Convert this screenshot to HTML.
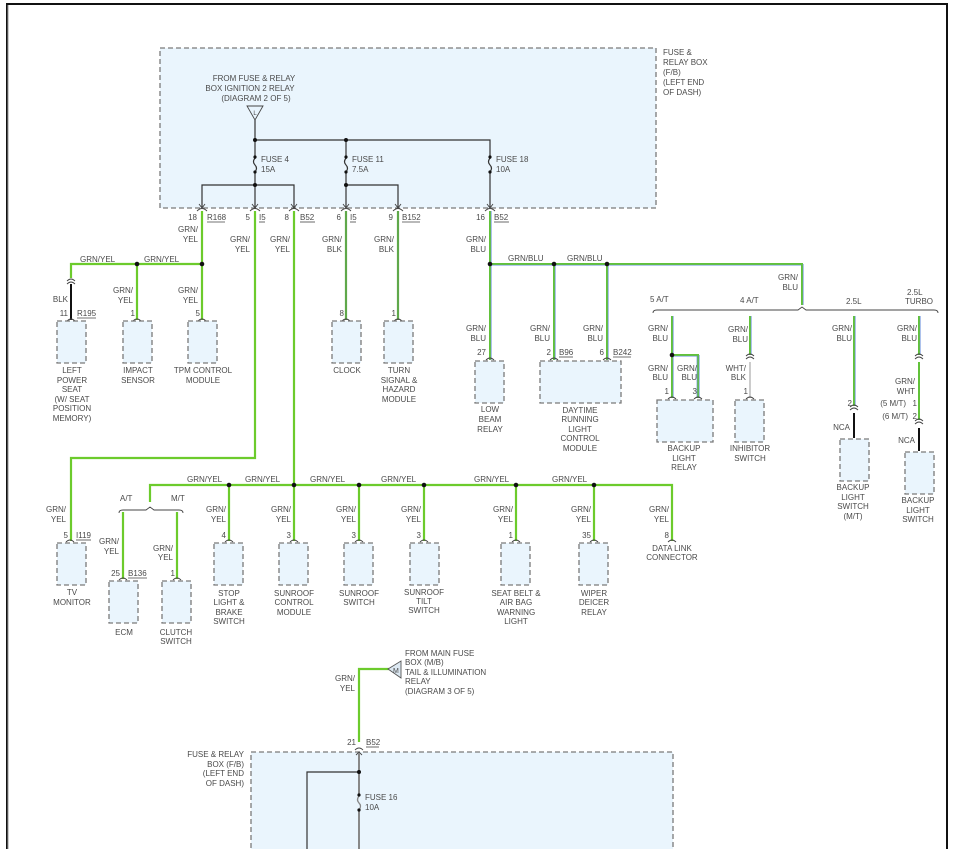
<!DOCTYPE html>
<html><head><meta charset="utf-8"><style>
html,body{margin:0;padding:0;background:#fff;width:956px;height:849px;overflow:hidden}
svg{display:block}
text{font-family:"Liberation Sans",sans-serif;font-size:8px;fill:#4a4a4a}
.m{text-anchor:middle}.r{text-anchor:end}
.box{fill:#eaf5fd;stroke:#7a7a7a;stroke-width:1.3;stroke-dasharray:5,3}
.gy{stroke:#6ccb2c;stroke-width:2.2;fill:none}
.gb{stroke:#62c23a;stroke-width:2;fill:none}
.bl{stroke:#6a90dc;stroke-width:0.7;fill:none}
.gk{stroke:#5fa84a;stroke-width:2.2;fill:none}
.k{stroke:#333;stroke-width:1.2;fill:none}
.kb{stroke:#111;stroke-width:2;fill:none}
.c{stroke:#444;stroke-width:0.9;fill:none}
.u{stroke:#444;stroke-width:0.8}
</style></head><body>
<svg width="956" height="849" viewBox="0 0 956 849">
<path d="M7 849V4H947V849" stroke="#111" stroke-width="2" fill="none"/>
<path d="M8 849V5" stroke="#999" stroke-width="1"/>

<rect class="box" x="160" y="48" width="496" height="160"/>
<text x="663" y="55">FUSE &amp;</text><text x="663" y="65">RELAY BOX</text><text x="663" y="75">(F/B)</text><text x="663" y="85">(LEFT END</text><text x="663" y="95">OF DASH)</text>
<text class="m" x="254" y="81">FROM FUSE &amp; RELAY</text>
<text class="m" x="250" y="91">BOX IGNITION 2 RELAY</text>
<text class="m" x="256" y="101">(DIAGRAM 2 OF 5)</text>
<path d="M247 106H263L255 120Z" fill="#e8f4fd" stroke="#444" stroke-width="0.9"/>
<text class="m" x="255" y="115" style="font-size:6px">L</text>
<path class="k" d="M255 120V208M255 140H490V208M346 140V208M202 208V185H294V208M346 185H398V208"/>
<g fill="#eaf5fd"><rect x="250" y="159" width="10" height="12"/><rect x="341" y="159" width="10" height="12"/><rect x="485" y="159" width="10" height="12"/></g>
<path class="k" d="M255 158q-3 4 0 7q3 3 0 7M346 158q-3 4 0 7q3 3 0 7M490 158q-3 4 0 7q3 3 0 7"/>
<g fill="#111"><circle cx="255" cy="140" r="2"/><circle cx="346" cy="140" r="2"/><circle cx="255" cy="185" r="2"/><circle cx="346" cy="185" r="2"/>
<circle cx="255" cy="157" r="1.6"/><circle cx="255" cy="172" r="1.6"/><circle cx="346" cy="157" r="1.6"/><circle cx="346" cy="172" r="1.6"/><circle cx="490" cy="157" r="1.6"/><circle cx="490" cy="172" r="1.6"/></g>
<text x="261" y="162">FUSE 4</text><text x="261" y="172">15A</text>
<text x="352" y="162">FUSE 11</text><text x="352" y="172">7.5A</text>
<text x="496" y="162">FUSE 18</text><text x="496" y="172">10A</text>
<g class="c">
<path d="M199 204l3 4 3-4M197 211q5-5 10 0M252 204l3 4 3-4M250 211q5-5 10 0M291 204l3 4 3-4M289 211q5-5 10 0M343 204l3 4 3-4M341 211q5-5 10 0M395 204l3 4 3-4M393 211q5-5 10 0M487 204l3 4 3-4M485 211q5-5 10 0"/>
</g>
<text class="r" x="197" y="220">18</text><text x="207" y="220">R168</text><line class="u" x1="207" y1="222" x2="225" y2="222"/>
<text class="r" x="250" y="220">5</text><text x="259" y="220">I5</text><line class="u" x1="259" y1="222" x2="265" y2="222"/>
<text class="r" x="289" y="220">8</text><text x="300" y="220">B52</text><line class="u" x1="300" y1="222" x2="315" y2="222"/>
<text class="r" x="341" y="220">6</text><text x="350" y="220">I5</text><line class="u" x1="350" y1="222" x2="356" y2="222"/>
<text class="r" x="393" y="220">9</text><text x="402" y="220">B152</text><line class="u" x1="402" y1="222" x2="420" y2="222"/>
<text class="r" x="485" y="220">16</text><text x="494" y="220">B52</text><line class="u" x1="494" y1="222" x2="509" y2="222"/>

<path class="gy" d="M202 211V320M202 264H71V278M137 264V320M255 211V458H71V541M294 211V541"/>
<path class="gk" d="M346 211V320M398 211V320"/>
<path class="c" d="M67 281q4-4 8 0M67 284q4-4 8 0"/>
<path class="kb" d="M71 284V320"/>
<g fill="#111"><circle cx="137" cy="264" r="2.3"/><circle cx="202" cy="264" r="2.3"/></g>
<text x="80" y="262">GRN/YEL</text><text x="144" y="262">GRN/YEL</text>
<text class="r" x="198" y="232">GRN/</text><text class="r" x="198" y="242">YEL</text>
<text class="r" x="250" y="242">GRN/</text><text class="r" x="250" y="252">YEL</text>
<text class="r" x="290" y="242">GRN/</text><text class="r" x="290" y="252">YEL</text>
<text class="r" x="342" y="242">GRN/</text><text class="r" x="342" y="252">BLK</text>
<text class="r" x="394" y="242">GRN/</text><text class="r" x="394" y="252">BLK</text>
<text class="r" x="68" y="302">BLK</text>
<text class="r" x="133" y="293">GRN/</text><text class="r" x="133" y="303">YEL</text>
<text class="r" x="198" y="293">GRN/</text><text class="r" x="198" y="303">YEL</text>
<text class="r" x="68" y="316">11</text><text x="77" y="316">R195</text><line class="u" x1="77" y1="318" x2="96" y2="318"/>
<text class="r" x="135" y="316">1</text><text class="r" x="200" y="316">5</text>
<text class="r" x="344" y="316">8</text><text class="r" x="396" y="316">1</text>
<g class="c"><path d="M67 321q4-4 8 0M133 321q4-4 8 0M198 321q4-4 8 0M342 321q4-4 8 0M394 321q4-4 8 0"/></g>
<rect class="box" x="57" y="321" width="29" height="42"/>
<rect class="box" x="123" y="321" width="29" height="42"/>
<rect class="box" x="188" y="321" width="29" height="42"/>
<rect class="box" x="332" y="321" width="29" height="42"/>
<rect class="box" x="384" y="321" width="29" height="42"/>
<g class="m"><text x="72" y="373">LEFT</text><text x="72" y="383">POWER</text><text x="72" y="392">SEAT</text><text x="72" y="402">(W/ SEAT</text><text x="72" y="411">POSITION</text><text x="72" y="421">MEMORY)</text>
<text x="138" y="373">IMPACT</text><text x="138" y="383">SENSOR</text>
<text x="203" y="373">TPM CONTROL</text><text x="203" y="383">MODULE</text>
<text x="347" y="373">CLOCK</text>
<text x="399" y="373">TURN</text><text x="399" y="383">SIGNAL &amp;</text><text x="399" y="392">HAZARD</text><text x="399" y="402">MODULE</text></g>

<path class="gb" d="M490 211V360M490 264H802V305M554 264V360M607 264V360"/>
<path class="bl" d="M491.2 211V360M491 265.2H801M803.2 264V305M555.2 265V360M608.2 265V360"/>
<g fill="#111"><circle cx="490" cy="264" r="2.3"/><circle cx="554" cy="264" r="2.3"/><circle cx="607" cy="264" r="2.3"/></g>
<text class="r" x="486" y="242">GRN/</text><text class="r" x="486" y="252">BLU</text>
<text x="508" y="261">GRN/BLU</text><text x="567" y="261">GRN/BLU</text>
<text class="r" x="798" y="280">GRN/</text><text class="r" x="798" y="290">BLU</text>
<text class="r" x="486" y="331">GRN/</text><text class="r" x="486" y="341">BLU</text>
<text class="r" x="550" y="331">GRN/</text><text class="r" x="550" y="341">BLU</text>
<text class="r" x="603" y="331">GRN/</text><text class="r" x="603" y="341">BLU</text>
<text class="r" x="486" y="355">27</text>
<text class="r" x="551" y="355">2</text><text x="559" y="355">B96</text><line class="u" x1="559" y1="357" x2="573" y2="357"/>
<text class="r" x="604" y="355">6</text><text x="613" y="355">B242</text><line class="u" x1="613" y1="357" x2="631" y2="357"/>
<g class="c"><path d="M486 360q4-4 8 0M550 360q4-4 8 0M603 360q4-4 8 0"/></g>
<rect class="box" x="475" y="361" width="29" height="42"/>
<rect class="box" x="540" y="361" width="81" height="42"/>
<g class="m"><text x="490" y="412">LOW</text><text x="490" y="422">BEAM</text><text x="490" y="432">RELAY</text>
<text x="580" y="413">DAYTIME</text><text x="580" y="422">RUNNING</text><text x="580" y="432">LIGHT</text><text x="580" y="441">CONTROL</text><text x="580" y="451">MODULE</text></g>

<path class="c" d="M653 313q0-3 4-3H798l4-3 4 3H934q4 0 4 3"/>
<text x="650" y="302">5 A/T</text><text x="740" y="303">4 A/T</text><text x="846" y="304">2.5L</text>
<text x="907" y="295">2.5L</text><text x="905" y="304">TURBO</text>
<path class="gb" d="M672 316V398M672 355H698V398M750 316V355M854 316V406M919 316V355M919 362V420"/>
<path class="bl" d="M673.2 316V398M673 356.2H697V398M699.2 355V398M751.2 316V355M855.2 316V406M920.2 316V355"/>
<path stroke="#ccc" stroke-width="2" d="M750 362V398"/>
<path class="kb" d="M854 413V438M919 428V451"/>
<circle cx="672" cy="355" r="2.3" fill="#111"/>
<g class="c"><path d="M746 356q4-4 8 0M746 359q4-4 8 0M850 407q4-4 8 0M850 410q4-4 8 0M915 356q4-4 8 0M915 359q4-4 8 0M915 421q4-4 8 0M915 424q4-4 8 0"/>
<path d="M668 399q4-4 8 0M694 399q4-4 8 0M746 399q4-4 8 0"/></g>
<text class="r" x="668" y="331">GRN/</text><text class="r" x="668" y="341">BLU</text>
<text class="r" x="668" y="371">GRN/</text><text class="r" x="668" y="380">BLU</text>
<text class="r" x="697" y="371">GRN/</text><text class="r" x="697" y="380">BLU</text>
<text class="r" x="748" y="332">GRN/</text><text class="r" x="748" y="342">BLU</text>
<text class="r" x="746" y="371">WHT/</text><text class="r" x="746" y="380">BLK</text>
<text class="r" x="852" y="331">GRN/</text><text class="r" x="852" y="341">BLU</text>
<text class="r" x="917" y="331">GRN/</text><text class="r" x="917" y="341">BLU</text>
<text class="r" x="915" y="384">GRN/</text><text class="r" x="915" y="394">WHT</text>
<text class="r" x="906" y="406">(5 M/T)</text><text class="r" x="917" y="406">1</text>
<text class="r" x="908" y="419">(6 M/T)</text><text class="r" x="917" y="419">2</text>
<text class="r" x="669" y="394">1</text><text class="r" x="697" y="394">3</text><text class="r" x="748" y="394">1</text>
<text class="r" x="852" y="406">2</text>
<text class="r" x="850" y="430">NCA</text><text class="r" x="915" y="443">NCA</text>
<rect class="box" x="657" y="400" width="56" height="42"/>
<rect class="box" x="735" y="400" width="29" height="42"/>
<rect class="box" x="840" y="439" width="29" height="42"/>
<rect class="box" x="905" y="452" width="29" height="42"/>
<g class="m"><text x="684" y="451">BACKUP</text><text x="684" y="461">LIGHT</text><text x="684" y="470">RELAY</text>
<text x="750" y="451">INHIBITOR</text><text x="750" y="461">SWITCH</text>
<text x="853" y="490">BACKUP</text><text x="853" y="500">LIGHT</text><text x="853" y="509">SWITCH</text><text x="853" y="519">(M/T)</text>
<text x="918" y="503">BACKUP</text><text x="918" y="513">LIGHT</text><text x="918" y="522">SWITCH</text></g>

<path class="gy" d="M150 502V485H672V541M229 485V541M359 485V541M424 485V541M516 485V541M594 485V541M123 512V579M177 512V579"/>
<path class="c" d="M119 513q0-3 4-3H146l4-3 4 3H179q4 0 4 3"/>
<g fill="#111"><circle cx="229" cy="485" r="2.3"/><circle cx="294" cy="485" r="2.3"/><circle cx="359" cy="485" r="2.3"/><circle cx="424" cy="485" r="2.3"/><circle cx="516" cy="485" r="2.3"/><circle cx="594" cy="485" r="2.3"/></g>
<text x="187" y="482">GRN/YEL</text><text x="245" y="482">GRN/YEL</text><text x="310" y="482">GRN/YEL</text><text x="381" y="482">GRN/YEL</text><text x="474" y="482">GRN/YEL</text><text x="552" y="482">GRN/YEL</text>
<text x="120" y="501">A/T</text><text x="171" y="501">M/T</text>
<text class="r" x="66" y="512">GRN/</text><text class="r" x="66" y="522">YEL</text>
<text class="r" x="226" y="512">GRN/</text><text class="r" x="226" y="522">YEL</text>
<text class="r" x="291" y="512">GRN/</text><text class="r" x="291" y="522">YEL</text>
<text class="r" x="356" y="512">GRN/</text><text class="r" x="356" y="522">YEL</text>
<text class="r" x="421" y="512">GRN/</text><text class="r" x="421" y="522">YEL</text>
<text class="r" x="513" y="512">GRN/</text><text class="r" x="513" y="522">YEL</text>
<text class="r" x="591" y="512">GRN/</text><text class="r" x="591" y="522">YEL</text>
<text class="r" x="669" y="512">GRN/</text><text class="r" x="669" y="522">YEL</text>
<text class="r" x="119" y="544">GRN/</text><text class="r" x="119" y="554">YEL</text>
<text class="r" x="173" y="551">GRN/</text><text class="r" x="173" y="560">YEL</text>
<text class="r" x="68" y="538">5</text><text x="76" y="538">I119</text><line class="u" x1="76" y1="540" x2="91" y2="540"/>
<text class="r" x="226" y="538">4</text><text class="r" x="291" y="538">3</text><text class="r" x="356" y="538">3</text><text class="r" x="421" y="538">3</text><text class="r" x="513" y="538">1</text><text class="r" x="591" y="538">35</text><text class="r" x="669" y="538">8</text>
<text class="r" x="120" y="576">25</text><text x="128" y="576">B136</text><line class="u" x1="128" y1="578" x2="147" y2="578"/>
<text class="r" x="175" y="576">1</text>
<g class="c"><path d="M66 542q4-4 8 0M225 542q4-4 8 0M290 542q4-4 8 0M355 542q4-4 8 0M420 542q4-4 8 0M512 542q4-4 8 0M590 542q4-4 8 0M668 542q4-4 8 0M119 580q4-4 8 0M173 580q4-4 8 0"/></g>
<rect class="box" x="57" y="543" width="29" height="42"/>
<rect class="box" x="214" y="543" width="29" height="42"/>
<rect class="box" x="279" y="543" width="29" height="42"/>
<rect class="box" x="344" y="543" width="29" height="42"/>
<rect class="box" x="410" y="543" width="29" height="42"/>
<rect class="box" x="501" y="543" width="29" height="42"/>
<rect class="box" x="579" y="543" width="29" height="42"/>
<rect class="box" x="109" y="581" width="29" height="42"/>
<rect class="box" x="162" y="581" width="29" height="42"/>
<g class="m"><text x="72" y="595">TV</text><text x="72" y="605">MONITOR</text>
<text x="229" y="596">STOP</text><text x="229" y="605">LIGHT &amp;</text><text x="229" y="615">BRAKE</text><text x="229" y="624">SWITCH</text>
<text x="294" y="596">SUNROOF</text><text x="294" y="605">CONTROL</text><text x="294" y="615">MODULE</text>
<text x="359" y="596">SUNROOF</text><text x="359" y="605">SWITCH</text>
<text x="424" y="595">SUNROOF</text><text x="424" y="604">TILT</text><text x="424" y="613">SWITCH</text>
<text x="516" y="596">SEAT BELT &amp;</text><text x="516" y="605">AIR BAG</text><text x="516" y="615">WARNING</text><text x="516" y="624">LIGHT</text>
<text x="594" y="596">WIPER</text><text x="594" y="605">DEICER</text><text x="594" y="615">RELAY</text>
<text x="672" y="551">DATA LINK</text><text x="672" y="560">CONNECTOR</text>
<text x="124" y="635">ECM</text><text x="176" y="635">CLUTCH</text><text x="176" y="644">SWITCH</text></g>

<path class="gy" d="M389 669H359V742"/>
<path d="M388 669L401 661V678Z" fill="#dce8f2" stroke="#555" stroke-width="0.9"/>
<text x="393" y="673" style="font-size:7px">M</text>
<text x="405" y="656">FROM MAIN FUSE</text><text x="405" y="665">BOX (M/B)</text><text x="405" y="675">TAIL &amp; ILLUMINATION</text><text x="405" y="684">RELAY</text><text x="405" y="694">(DIAGRAM 3 OF 5)</text>
<text class="r" x="355" y="681">GRN/</text><text class="r" x="355" y="691">YEL</text>
<text class="r" x="356" y="745">21</text><text x="366" y="745">B52</text><line class="u" x1="366" y1="747" x2="379" y2="747"/>
<rect class="box" x="251" y="752" width="422" height="110"/>
<path class="c" d="M355 750q4-4 8 0M356 755l3-3 3 3"/>
<text class="r" x="244" y="757">FUSE &amp; RELAY</text><text class="r" x="244" y="767">BOX (F/B)</text><text class="r" x="244" y="776">(LEFT END</text><text class="r" x="244" y="786">OF DASH)</text>
<path stroke="#888" stroke-width="2" fill="none" d="M359 753V795M359 810V849"/>
<path class="k" d="M359 772H307V849"/>
<path stroke="#888" stroke-width="1.3" fill="none" d="M359 796q-3 4 0 7q3 3 0 7"/>
<g fill="#111"><circle cx="359" cy="772" r="2"/><circle cx="359" cy="795" r="1.6"/><circle cx="359" cy="810" r="1.6"/></g>
<text x="365" y="800">FUSE 16</text><text x="365" y="810">10A</text>
</svg>
</body></html>
